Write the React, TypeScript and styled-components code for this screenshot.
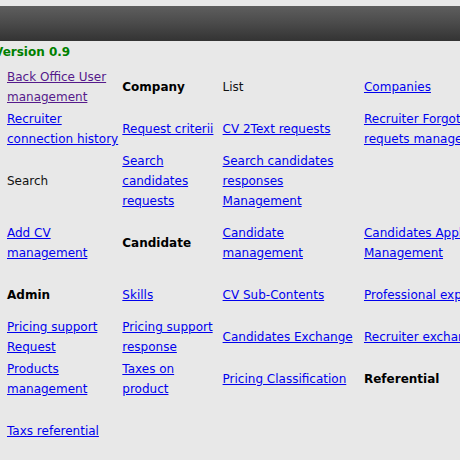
import React from "react";
import styled, { createGlobalStyle } from "styled-components";

const Global = createGlobalStyle`
  html, body { margin: 0; padding: 0; background: #e8e8e8; }
  body { width: 460px; height: 460px; overflow: hidden; font-family: "DejaVu Sans", Verdana, sans-serif; font-size: 12px; line-height: 20px; color: #111; }
`;

const Page = styled.div`
  width: 460px;
  height: 460px;
  overflow: hidden;
  padding-top: 6px;
  box-sizing: border-box;
`;

const Header = styled.div`
  height: 35px;
  width: 100%;
  background: linear-gradient(to bottom, #5e5e5e 0%, #4a4a4a 50%, #333333 100%);
`;

const Version = styled.div`
  font-weight: bold;
  color: #008000;
  line-height: 20px;
  margin: 1px 0 0 -6px;
  white-space: nowrap;
`;

const Table = styled.table`
  border-spacing: 2px;
  border-collapse: separate;
  table-layout: fixed;
  margin: 3px 0 0 5px;
  width: 719px;
`;

const Col = styled.col<{ $w: number }>`
  width: ${(p) => p.$w}px;
`;

const Row = styled.tr<{ $h: number }>`
  height: ${(p) => p.$h}px;
`;

const Cell = styled.td`
  padding: 0;
  vertical-align: middle;
  white-space: normal;
`;

const Link = styled.a<{ $visited?: boolean }>`
  color: ${(p) => (p.$visited ? "#551a8b" : "#0000ee")};
  text-decoration: underline;
  cursor: pointer;
`;

const Title = styled.span`
  font-weight: bold;
  color: #000;
`;

const Plain = styled.span`
  color: #111;
`;

type C = { t: "link" | "title" | "plain" | "empty"; text?: string; visited?: boolean };

const L = (text: string, visited = false): C => ({ t: "link", text, visited });
const T = (text: string): C => ({ t: "title", text });
const P = (text: string): C => ({ t: "plain", text });
const E: C = { t: "empty" };

const rows: { h: number; cells: C[] }[] = [
  { h: 40, cells: [L("Back Office User management", true), T("Company"), P("List"), L("Companies")] },
  { h: 40, cells: [L("Recruiter connection history"), L("Request criterii"), L("CV 2Text requests"), L("Recruiter Forgot password requets management")] },
  { h: 60, cells: [P("Search"), L("Search candidates requests"), L("Search candidates responses Management"), E] },
  { h: 60, cells: [L("Add CV management"), T("Candidate"), L("Candidate management"), L("Candidates Applications Management")] },
  { h: 40, cells: [T("Admin"), L("Skills"), L("CV Sub-Contents"), L("Professional experiences")] },
  { h: 40, cells: [L("Pricing support Request"), L("Pricing support response"), L("Candidates Exchange"), L("Recruiter exchange")] },
  { h: 40, cells: [L("Products management"), L("Taxes on product"), L("Pricing Classification"), T("Referential")] },
  { h: 60, cells: [L("Taxs referential"), E, E, E] },
];

function render(c: C) {
  if (c.t === "link") return <Link href="#" $visited={c.visited}>{c.text}</Link>;
  if (c.t === "title") return <Title>{c.text}</Title>;
  if (c.t === "plain") return <Plain>{c.text}</Plain>;
  return null;
}

export default function App() {
  return (
    <Page>
      <Global />
      <Header />
      <Version>Version 0.9</Version>
      <Table>
        <colgroup>
          <Col $w={113} />
          <Col $w={98} />
          <Col $w={139} />
          <Col $w={175} />
          <Col $w={180} />
        </colgroup>
        <tbody>
          {rows.map((r, i) => (
            <Row key={i} $h={r.h}>
              {r.cells.map((c, j) => (
                <Cell key={j}>{render(c)}</Cell>
              ))}
              <Cell />
            </Row>
          ))}
        </tbody>
      </Table>
    </Page>
  );
}
